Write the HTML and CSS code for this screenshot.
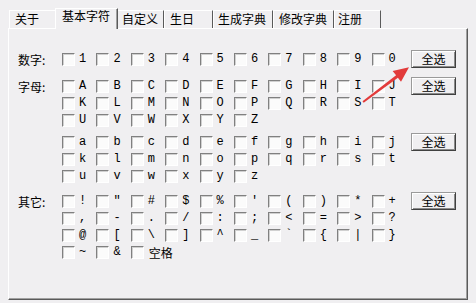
FILE: index.html
```html
<!DOCTYPE html>
<html>
<head>
<meta charset="utf-8">
<link rel="stylesheet" href="styles.css">
</head>
<body>
<div class="window">
  <div class="tabs">
    <div class="tab t1">关于</div>
    <div class="tab active t2">基本字符</div>
    <div class="tab t3">自定义</div>
    <div class="tab t4">生日</div>
    <div class="tab t5">生成字典</div>
    <div class="tab t6">修改字典</div>
    <div class="tab t7">注册</div>
  </div>
  <div class="panel">
    <div class="section s1">
      <div class="label">数字:</div>
      <div class="grid">
        <div class="item"><span class="cb"></span><span class="ch">1</span></div>
        <div class="item"><span class="cb"></span><span class="ch">2</span></div>
        <div class="item"><span class="cb"></span><span class="ch">3</span></div>
        <div class="item"><span class="cb"></span><span class="ch">4</span></div>
        <div class="item"><span class="cb"></span><span class="ch">5</span></div>
        <div class="item"><span class="cb"></span><span class="ch">6</span></div>
        <div class="item"><span class="cb"></span><span class="ch">7</span></div>
        <div class="item"><span class="cb"></span><span class="ch">8</span></div>
        <div class="item"><span class="cb"></span><span class="ch">9</span></div>
        <div class="item"><span class="cb"></span><span class="ch">0</span></div>
      </div>
      <div class="btncol"><button class="btn">全选</button></div>
    </div>
    <div class="section s2">
      <div class="label">字母:</div>
      <div class="grid">
        <div class="item"><span class="cb"></span><span class="ch">A</span></div>
        <div class="item"><span class="cb"></span><span class="ch">B</span></div>
        <div class="item"><span class="cb"></span><span class="ch">C</span></div>
        <div class="item"><span class="cb"></span><span class="ch">D</span></div>
        <div class="item"><span class="cb"></span><span class="ch">E</span></div>
        <div class="item"><span class="cb"></span><span class="ch">F</span></div>
        <div class="item"><span class="cb"></span><span class="ch">G</span></div>
        <div class="item"><span class="cb"></span><span class="ch">H</span></div>
        <div class="item"><span class="cb"></span><span class="ch">I</span></div>
        <div class="item"><span class="cb"></span><span class="ch">J</span></div>
        <div class="item"><span class="cb"></span><span class="ch">K</span></div>
        <div class="item"><span class="cb"></span><span class="ch">L</span></div>
        <div class="item"><span class="cb"></span><span class="ch">M</span></div>
        <div class="item"><span class="cb"></span><span class="ch">N</span></div>
        <div class="item"><span class="cb"></span><span class="ch">O</span></div>
        <div class="item"><span class="cb"></span><span class="ch">P</span></div>
        <div class="item"><span class="cb"></span><span class="ch">Q</span></div>
        <div class="item"><span class="cb"></span><span class="ch">R</span></div>
        <div class="item"><span class="cb"></span><span class="ch">S</span></div>
        <div class="item"><span class="cb"></span><span class="ch">T</span></div>
        <div class="item"><span class="cb"></span><span class="ch">U</span></div>
        <div class="item"><span class="cb"></span><span class="ch">V</span></div>
        <div class="item"><span class="cb"></span><span class="ch">W</span></div>
        <div class="item"><span class="cb"></span><span class="ch">X</span></div>
        <div class="item"><span class="cb"></span><span class="ch">Y</span></div>
        <div class="item"><span class="cb"></span><span class="ch">Z</span></div>
      </div>
      <div class="btncol"><button class="btn">全选</button></div>
    </div>
    <div class="section s3">
      <div class="label"></div>
      <div class="grid">
        <div class="item"><span class="cb"></span><span class="ch">a</span></div>
        <div class="item"><span class="cb"></span><span class="ch">b</span></div>
        <div class="item"><span class="cb"></span><span class="ch">c</span></div>
        <div class="item"><span class="cb"></span><span class="ch">d</span></div>
        <div class="item"><span class="cb"></span><span class="ch">e</span></div>
        <div class="item"><span class="cb"></span><span class="ch">f</span></div>
        <div class="item"><span class="cb"></span><span class="ch">g</span></div>
        <div class="item"><span class="cb"></span><span class="ch">h</span></div>
        <div class="item"><span class="cb"></span><span class="ch">i</span></div>
        <div class="item"><span class="cb"></span><span class="ch">j</span></div>
        <div class="item"><span class="cb"></span><span class="ch">k</span></div>
        <div class="item"><span class="cb"></span><span class="ch">l</span></div>
        <div class="item"><span class="cb"></span><span class="ch">m</span></div>
        <div class="item"><span class="cb"></span><span class="ch">n</span></div>
        <div class="item"><span class="cb"></span><span class="ch">o</span></div>
        <div class="item"><span class="cb"></span><span class="ch">p</span></div>
        <div class="item"><span class="cb"></span><span class="ch">q</span></div>
        <div class="item"><span class="cb"></span><span class="ch">r</span></div>
        <div class="item"><span class="cb"></span><span class="ch">s</span></div>
        <div class="item"><span class="cb"></span><span class="ch">t</span></div>
        <div class="item"><span class="cb"></span><span class="ch">u</span></div>
        <div class="item"><span class="cb"></span><span class="ch">v</span></div>
        <div class="item"><span class="cb"></span><span class="ch">w</span></div>
        <div class="item"><span class="cb"></span><span class="ch">x</span></div>
        <div class="item"><span class="cb"></span><span class="ch">y</span></div>
        <div class="item"><span class="cb"></span><span class="ch">z</span></div>
      </div>
      <div class="btncol"><button class="btn">全选</button></div>
    </div>
    <div class="section s4">
      <div class="label">其它:</div>
      <div class="grid">
        <div class="item"><span class="cb"></span><span class="ch">!</span></div>
        <div class="item"><span class="cb"></span><span class="ch">"</span></div>
        <div class="item"><span class="cb"></span><span class="ch">#</span></div>
        <div class="item"><span class="cb"></span><span class="ch">$</span></div>
        <div class="item"><span class="cb"></span><span class="ch">%</span></div>
        <div class="item"><span class="cb"></span><span class="ch">'</span></div>
        <div class="item"><span class="cb"></span><span class="ch">(</span></div>
        <div class="item"><span class="cb"></span><span class="ch">)</span></div>
        <div class="item"><span class="cb"></span><span class="ch">*</span></div>
        <div class="item"><span class="cb"></span><span class="ch">+</span></div>
        <div class="item"><span class="cb"></span><span class="ch">,</span></div>
        <div class="item"><span class="cb"></span><span class="ch">-</span></div>
        <div class="item"><span class="cb"></span><span class="ch">.</span></div>
        <div class="item"><span class="cb"></span><span class="ch">/</span></div>
        <div class="item"><span class="cb"></span><span class="ch">:</span></div>
        <div class="item"><span class="cb"></span><span class="ch">;</span></div>
        <div class="item"><span class="cb"></span><span class="ch">&lt;</span></div>
        <div class="item"><span class="cb"></span><span class="ch">=</span></div>
        <div class="item"><span class="cb"></span><span class="ch">&gt;</span></div>
        <div class="item"><span class="cb"></span><span class="ch">?</span></div>
        <div class="item"><span class="cb"></span><span class="ch">@</span></div>
        <div class="item"><span class="cb"></span><span class="ch">[</span></div>
        <div class="item"><span class="cb"></span><span class="ch">\</span></div>
        <div class="item"><span class="cb"></span><span class="ch">]</span></div>
        <div class="item"><span class="cb"></span><span class="ch">^</span></div>
        <div class="item"><span class="cb"></span><span class="ch">_</span></div>
        <div class="item"><span class="cb"></span><span class="ch">`</span></div>
        <div class="item"><span class="cb"></span><span class="ch">{</span></div>
        <div class="item"><span class="cb"></span><span class="ch">|</span></div>
        <div class="item"><span class="cb"></span><span class="ch">}</span></div>
        <div class="item"><span class="cb"></span><span class="ch">~</span></div>
        <div class="item"><span class="cb"></span><span class="ch">&amp;</span></div>
        <div class="item"><span class="cb"></span><span class="cjk">空格</span></div>
      </div>
      <div class="btncol"><button class="btn">全选</button></div>
    </div>
  </div>
  <svg class="arrow" width="476" height="303" viewBox="0 0 476 303">
    <polygon points="362.5,101.2 396.1,75.3 392.6,71.0 409,67.2 401,81.8 397.9,77.7 363.7,102.8" fill="#e23b3b"/>
  </svg>
</div>
</body>
</html>
```

FILE: styles.css
```css
html, body {
  margin: 0;
  padding: 0;
}
body {
  background: #f0eff1;
  width: 476px;
  height: 303px;
  overflow: hidden;
  font-family: "Noto Sans CJK SC", "Noto Sans", sans-serif;
  font-size: 12px;
  color: #000;
}
.window {
  position: relative;
  width: 476px;
  height: 303px;
}
.tabs {
  display: flex;
  align-items: flex-end;
  height: 28px;
  padding-left: 9px;
  position: relative;
  z-index: 2;
}
.tab {
  box-sizing: border-box;
  height: 18px;
  line-height: 16px;
  padding-left: 5px;
  border-top: 1px solid #ffffff;
  border-left: 1px solid #ffffff;
  border-right: 1px solid #5a5a5a;
  white-space: nowrap;
  background: #f0eff1;
}
.tab.active {
  height: 21px;
  margin-bottom: -1px;
  line-height: 13px;
  padding-left: 6px;
  box-shadow: inset -1px 0 0 #a0a0a0;
}
.t1 { width: 46px; border-right: none; }
.t2 { width: 63px; }
.t3 { width: 46px; padding-left: 4px; border-left: none; }
.t4 { width: 49px; }
.t5 { width: 60px; padding-left: 4px; }
.t6 { width: 61px; }
.t7 { width: 47px; padding-left: 3px; }

.panel {
  box-sizing: border-box;
  margin-left: 8px;
  width: 460px;
  height: 272px;
  border-top: 1px solid #ffffff;
  border-left: 1px solid #ffffff;
  border-right: 1px solid #5a5a5a;
  border-bottom: 1px solid #5a5a5a;
  box-shadow: inset -1px -1px 0 #a0a0a0;
  padding: 22px 0 0 9px;
  position: relative;
  z-index: 1;
}
.section {
  display: grid;
  grid-template-columns: 44px 349px 45px;
  align-items: start;
}
.s2 { margin-top: 10px; }
.s3 { margin-top: 5px; }
.s4 { margin-top: 8px; }
.label {
  height: 17px;
  line-height: 17px;
  white-space: nowrap;
}
.grid {
  display: grid;
  grid-template-columns: repeat(10, 34.4px);
  grid-auto-rows: 17px;
}
.item {
  display: flex;
  align-items: center;
  height: 17px;
  white-space: nowrap;
}
.cb {
  box-sizing: border-box;
  width: 13px;
  height: 13px;
  border-top: 1px solid #808080;
  border-left: 1px solid #808080;
  border-right: 1px solid #ffffff;
  border-bottom: 1px solid #ffffff;
  background: #fbfbfb;
  box-shadow: inset 1px 1px 0 #d0d0d0;
  flex: none;
}
.ch {
  margin-left: 4px;
  font-family: "Liberation Mono", monospace;
  font-size: 12px;
  line-height: 17px;
}
.cjk {
  margin-left: 5px;
  font-size: 12px;
  line-height: 17px;
  white-space: nowrap;
  flex: none;
}
.btncol {
  display: flex;
  justify-content: flex-start;
}
.btn {
  box-sizing: border-box;
  width: 45px;
  height: 18px;
  margin: -1px 0 0 0;
  padding: 0;
  font-family: "Noto Sans CJK SC", sans-serif;
  font-size: 12px;
  line-height: 14px;
  color: #000;
  background: #f0eff1;
  border-top: 1px solid #9a9a9a;
  border-left: 1px solid #9a9a9a;
  border-right: 1px solid #404040;
  border-bottom: 1px solid #404040;
  box-shadow: inset 1px 1px 0 #ffffff, inset -1px -1px 0 #8a8a8a;
}
.arrow {
  position: absolute;
  left: 0;
  top: 0;
  pointer-events: none;
  z-index: 5;
}
```
